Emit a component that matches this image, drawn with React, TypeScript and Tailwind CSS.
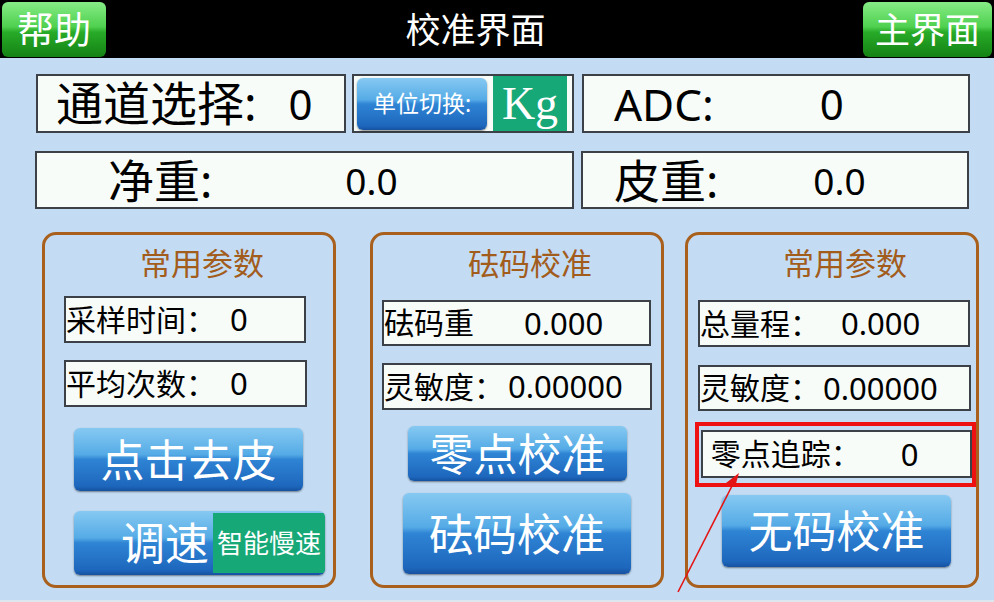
import React from 'react';

const cjk = "font-['Noto_Sans','Noto_Sans_CJK_SC',sans-serif]";
const blueBtn =
  'bg-[linear-gradient(180deg,#86c9f2_0%,#55abe6_42%,#2f84d4_50%,#1d67bd_92%,#1652a0_100%)] shadow-[0_1px_2px_rgba(0,0,0,0.45)] rounded-md text-white';
const greenBtn =
  'bg-[linear-gradient(180deg,#86ec86_0%,#4fd04f_45%,#28ab28_55%,#148214_100%)] rounded-md text-white';

interface FieldProps {
  label: string;
  value: string;
  gap: string;
  className?: string;
}

const Field = ({ label, value, gap, className }: FieldProps) => {
  return (
    <div
      className={`flex items-center border-2 border-[#3c4148] bg-[#f8fcf9] leading-none text-black ${className ?? ''}`}
    >
      <span className="whitespace-pre text-[30px]">{label}</span>
      <span className={`text-[31px] ${gap}`}>{value}</span>
    </div>
  );
};

const Panel = ({ title, className, children }: { title: string; className?: string; children: React.ReactNode }) => {
  return (
    <div className={`flex h-[356px] w-[294px] flex-col rounded-[14px] border-[3px] border-[#a8601c] ${className ?? ''}`}>
      <div className="mt-[11px] pl-[26px] text-center text-[31px] leading-[34px] text-[#a25c1c]">{title}</div>
      {children}
    </div>
  );
};

export default function App() {
  return (
    <div className={`relative h-[602px] w-[994px] overflow-hidden bg-[#c3dcf4] ${cjk}`}>
      {/* top bar */}
      <div className="flex h-[58px] items-center bg-black px-[2px]">
        <div className={`flex h-[55px] w-[104px] items-center justify-center text-[37px] leading-none ${greenBtn}`}>帮助</div>
        <div className="flex-1 pr-[18px] text-center text-[35px] leading-none text-white">校准界面</div>
        <div className={`flex h-[55px] w-[129px] items-center justify-center text-[35px] leading-none ${greenBtn}`}>主界面</div>
      </div>

      {/* row 1 */}
      <div className="mt-[16px] flex h-[59px] pl-[36px]">
        <div className="flex w-[310px] items-center border-2 border-[#3c4148] bg-[#f8fcf9] text-black">
          <span className="ml-[18px] text-[47px] leading-none">通道选择:</span>
          <span className="ml-[32px] text-[42px] leading-none">0</span>
        </div>
        <div className="ml-[6px] flex w-[222px] items-center border-2 border-[#3c4148] bg-[#f8fcf9] px-[3px]">
          <div className={`flex h-[52px] w-[130px] items-center justify-center text-[23px] leading-none ${blueBtn}`}>单位切换:</div>
          <div className="ml-[6px] flex h-[55px] w-[74px] items-center justify-center bg-[#17a877] font-['Liberation_Serif',serif] text-[46px] leading-none text-white">
            Kg
          </div>
        </div>
        <div className="ml-[8px] flex w-[388px] items-center border-2 border-[#3c4148] bg-[#f8fcf9] text-[44px] leading-none text-black">
          <span className="ml-[30px]">ADC:</span>
          <span className="ml-[106px] text-[42px]">0</span>
        </div>
      </div>

      {/* row 2 */}
      <div className="mt-[18px] flex h-[58px] pl-[35px]">
        <div className="flex w-[539px] items-center border-2 border-[#3c4148] bg-[#f8fcf9] text-black">
          <span className="ml-[71px] text-[46px] leading-none">净重:</span>
          <span className="ml-[133px] text-[37px] leading-none">0.0</span>
        </div>
        <div className="ml-[7px] flex w-[388px] items-center border-2 border-[#3c4148] bg-[#f8fcf9] text-black">
          <span className="ml-[31px] text-[46px] leading-none">皮重:</span>
          <span className="ml-[95px] text-[37px] leading-none">0.0</span>
        </div>
      </div>

      {/* panels */}
      <div className="mt-[23px] flex pl-[42px]">
        <Panel title="常用参数">
          <Field label="采样时间：" value="0" gap="ml-[14px]" className="ml-[19px] mt-[16px] h-[47px] w-[242px]" />
          <Field label="平均次数：" value="0" gap="ml-[14px]" className="ml-[19px] mt-[17px] h-[47px] w-[243px]" />
          <div className={`ml-[29px] mt-[21px] flex h-[63px] w-[229px] items-center justify-center text-[44px] ${blueBtn}`}>
            点击去皮
          </div>
          <div className={`ml-[29px] mt-[20px] flex h-[64px] w-[251px] items-stretch overflow-hidden ${blueBtn}`}>
            <div className="flex flex-1 items-center justify-end pr-[4px] text-[44px] leading-none">调速</div>
            <div className="my-[2px] flex w-[112px] items-center justify-center bg-[#17a877] text-[26px] leading-none">
              智能慢速
            </div>
          </div>
        </Panel>

        <Panel title="砝码校准" className="ml-[34px] w-[293px]">
          <Field label="砝码重" value="0.000" gap="ml-[50px]" className="ml-[9px] mt-[20px] h-[46px] w-[269px]" />
          <Field label="灵敏度：" value="0.00000" gap="ml-[4px]" className="ml-[9px] mt-[17px] h-[47px] w-[270px]" />
          <div className={`ml-[35px] mt-[16px] flex h-[55px] w-[219px] items-center justify-center text-[44px] ${blueBtn}`}>
            零点校准
          </div>
          <div className={`ml-[30px] mt-[12px] flex h-[81px] w-[228px] items-center justify-center text-[44px] ${blueBtn}`}>
            砝码校准
          </div>
        </Panel>

        <Panel title="常用参数" className="ml-[21px]">
          <Field label="总量程：" value="0.000" gap="ml-[21px]" className="ml-[10px] mt-[20px] h-[47px] w-[272px]" />
          <Field label="灵敏度：" value="0.00000" gap="ml-[3px]" className="ml-[10px] mt-[18px] h-[46px] w-[273px]" />
          <div className="ml-[7px] mt-[11px] h-[65px] w-[281px] border-4 border-[#ee1111] px-[2px] pt-[4px]">
            <Field label=" 零点追踪：" value="0" gap="ml-[40px]" className="h-[48px] w-[271px]" />
          </div>
          <div className={`ml-[34px] mt-[8px] flex h-[72px] w-[229px] items-center justify-center text-[44px] ${blueBtn}`}>
            无码校准
          </div>
        </Panel>
      </div>

      <div className="absolute bottom-0 left-0 h-[2px] w-full bg-[#dde6ef]" />

      {/* annotation arrow */}
      <svg className="absolute left-0 top-0" width="994" height="602" viewBox="0 0 994 602">
        <line x1="678" y1="592" x2="734" y2="482" stroke="#e41515" strokeWidth="1.6" />
        <polygon points="739,473 726,483 735,487" fill="#e41515" />
      </svg>
    </div>
  );
}
